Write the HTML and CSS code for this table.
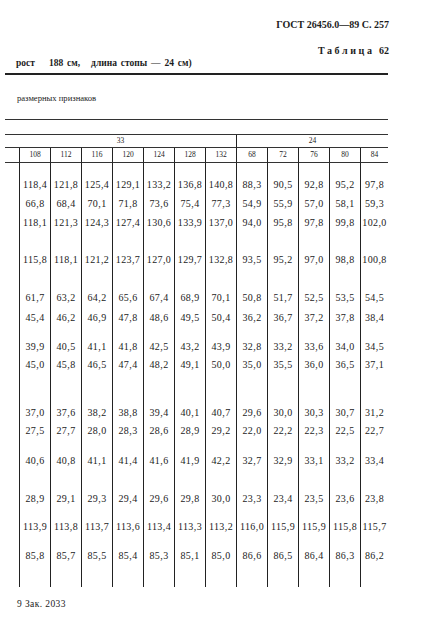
FILE: index.html
```html
<!DOCTYPE html>
<html lang="ru">
<head>
<meta charset="utf-8">
<title>ГОСТ 26456.0—89 С. 257</title>
<link rel="stylesheet" href="styles.css">
</head>
<body>
<div class="page">
  <div class="gost">ГОСТ 26456.0—89 С. 257</div>
  <div class="tabl"><span class="spaced">Таблица</span> 62</div>
  <div class="title"><span>рост</span><span class="g1">188 см,</span><span class="g2">длина стопы — 24 см)</span></div>
  <div class="rule"></div>
  <div class="label">размерных признаков</div>
  <table class="data">
    <colgroup>
      <col class="lab">
      <col class="c"><col class="c"><col class="c"><col class="c"><col class="c"><col class="c"><col class="c">
      <col class="c"><col class="c"><col class="c"><col class="c">
      <col class="last">
    </colgroup>
    <tr class="r0"><td colspan="13" class="top"></td></tr>
    <tr class="r1"><td colspan="8" class="grp">33</td><td colspan="5" class="grp v">24</td></tr>
    <tr class="r2">
      <td class="hd"></td>
      <td class="hd v">108</td><td class="hd v">112</td><td class="hd v">116</td><td class="hd v">120</td><td class="hd v">124</td><td class="hd v">128</td><td class="hd v">132</td>
      <td class="hd v">68</td><td class="hd v">72</td><td class="hd v">76</td><td class="hd v">80</td><td class="hd v">84</td>
    </tr>
    <tr class="h30"><td></td><td class="v">118,4</td><td class="v">121,8</td><td class="v">125,4</td><td class="v">129,1</td><td class="v">133,2</td><td class="v">136,8</td><td class="v">140,8</td><td class="v">88,3</td><td class="v">90,5</td><td class="v">92,8</td><td class="v">95,2</td><td class="v">97,8</td></tr>
    <tr class="h19"><td></td><td class="v">66,8</td><td class="v">68,4</td><td class="v">70,1</td><td class="v">71,8</td><td class="v">73,6</td><td class="v">75,4</td><td class="v">77,3</td><td class="v">54,9</td><td class="v">55,9</td><td class="v">57,0</td><td class="v">58,1</td><td class="v">59,3</td></tr>
    <tr class="h19"><td></td><td class="v">118,1</td><td class="v">121,3</td><td class="v">124,3</td><td class="v">127,4</td><td class="v">130,6</td><td class="v">133,9</td><td class="v">137,0</td><td class="v">94,0</td><td class="v">95,8</td><td class="v">97,8</td><td class="v">99,8</td><td class="v">102,0</td></tr>
    <tr class="h37"><td></td><td class="v">115,8</td><td class="v">118,1</td><td class="v">121,2</td><td class="v">123,7</td><td class="v">127,0</td><td class="v">129,7</td><td class="v">132,8</td><td class="v">93,5</td><td class="v">95,2</td><td class="v">97,0</td><td class="v">98,8</td><td class="v">100,8</td></tr>
    <tr class="h38"><td></td><td class="v">61,7</td><td class="v">63,2</td><td class="v">64,2</td><td class="v">65,6</td><td class="v">67,4</td><td class="v">68,9</td><td class="v">70,1</td><td class="v">50,8</td><td class="v">51,7</td><td class="v">52,5</td><td class="v">53,5</td><td class="v">54,5</td></tr>
    <tr class="h20"><td></td><td class="v">45,4</td><td class="v">46,2</td><td class="v">46,9</td><td class="v">47,8</td><td class="v">48,6</td><td class="v">49,5</td><td class="v">50,4</td><td class="v">36,2</td><td class="v">36,7</td><td class="v">37,2</td><td class="v">37,8</td><td class="v">38,4</td></tr>
    <tr class="h29"><td></td><td class="v">39,9</td><td class="v">40,5</td><td class="v">41,1</td><td class="v">41,8</td><td class="v">42,5</td><td class="v">43,2</td><td class="v">43,9</td><td class="v">32,8</td><td class="v">33,2</td><td class="v">33,6</td><td class="v">34,0</td><td class="v">34,5</td></tr>
    <tr class="h18"><td></td><td class="v">45,0</td><td class="v">45,8</td><td class="v">46,5</td><td class="v">47,4</td><td class="v">48,2</td><td class="v">49,1</td><td class="v">50,0</td><td class="v">35,0</td><td class="v">35,5</td><td class="v">36,0</td><td class="v">36,5</td><td class="v">37,1</td></tr>
    <tr class="h48"><td></td><td class="v">37,0</td><td class="v">37,6</td><td class="v">38,2</td><td class="v">38,8</td><td class="v">39,4</td><td class="v">40,1</td><td class="v">40,7</td><td class="v">29,6</td><td class="v">30,0</td><td class="v">30,3</td><td class="v">30,7</td><td class="v">31,2</td></tr>
    <tr class="h18"><td></td><td class="v">27,5</td><td class="v">27,7</td><td class="v">28,0</td><td class="v">28,3</td><td class="v">28,6</td><td class="v">28,9</td><td class="v">29,2</td><td class="v">22,0</td><td class="v">22,2</td><td class="v">22,3</td><td class="v">22,5</td><td class="v">22,7</td></tr>
    <tr class="h30"><td></td><td class="v">40,6</td><td class="v">40,8</td><td class="v">41,1</td><td class="v">41,4</td><td class="v">41,6</td><td class="v">41,9</td><td class="v">42,2</td><td class="v">32,7</td><td class="v">32,9</td><td class="v">33,1</td><td class="v">33,2</td><td class="v">33,4</td></tr>
    <tr class="h38"><td></td><td class="v">28,9</td><td class="v">29,1</td><td class="v">29,3</td><td class="v">29,4</td><td class="v">29,6</td><td class="v">29,8</td><td class="v">30,0</td><td class="v">23,3</td><td class="v">23,4</td><td class="v">23,5</td><td class="v">23,6</td><td class="v">23,8</td></tr>
    <tr class="h28"><td></td><td class="v">113,9</td><td class="v">113,8</td><td class="v">113,7</td><td class="v">113,6</td><td class="v">113,4</td><td class="v">113,3</td><td class="v">113,2</td><td class="v">116,0</td><td class="v">115,9</td><td class="v">115,9</td><td class="v">115,8</td><td class="v">115,7</td></tr>
    <tr class="h29"><td></td><td class="v">85,8</td><td class="v">85,7</td><td class="v">85,5</td><td class="v">85,4</td><td class="v">85,3</td><td class="v">85,1</td><td class="v">85,0</td><td class="v">86,6</td><td class="v">86,5</td><td class="v">86,4</td><td class="v">86,3</td><td class="v">86,2</td></tr>
    <tr class="h23"><td></td><td class="v"></td><td class="v"></td><td class="v"></td><td class="v"></td><td class="v"></td><td class="v"></td><td class="v"></td><td class="v"></td><td class="v"></td><td class="v"></td><td class="v"></td><td class="v"></td></tr>
  </table>
  <div class="foot">9 Зак. 2033</div>
</div>
</body>
</html>
```

FILE: styles.css
```css
html, body {
  margin: 0;
  padding: 0;
  background: #ffffff;
}
body {
  font-family: "Liberation Serif", "Times New Roman", serif;
  color: #1c1c1c;
}
.page {
  margin-left: 5px;
  width: 384px;
  padding-top: 19px;
}
.gost {
  text-align: right;
  font-size: 10px;
  font-weight: bold;
  line-height: 12px;
  height: 12px;
}
.tabl {
  margin-top: 14px;
  text-align: right;
  font-size: 10px;
  font-weight: bold;
  line-height: 12px;
  height: 12px;
}
.spaced {
  letter-spacing: 2.6px;
  margin-right: 2px;
}
.title {
  display: flex;
  padding-left: 11px;
  font-size: 9.5px;
  font-weight: bold;
  line-height: 12px;
  height: 12px;
  word-spacing: 1.5px;
}
.g1 { margin-left: 14px; }
.g2 { margin-left: 11px; }
.rule {
  margin-top: 4px;
  height: 2px;
  width: 383px;
  background: #222;
}
.label {
  margin-top: 17px;
  padding-left: 12px;
  font-size: 8.6px;
  line-height: 12px;
  height: 12px;
}
.data {
  margin-top: 15px;
  width: 383px;
  table-layout: fixed;
  border-collapse: separate;
  border-spacing: 0;
}
col.lab { width: 14px; }
col.c { width: 31px; }
col.last { width: 28px; }
.data td {
  padding: 0;
  box-sizing: border-box;
  text-align: center;
  vertical-align: bottom;
  font-size: 10px;
  letter-spacing: 0.4px;
  line-height: 16px;
  white-space: nowrap;
  overflow: visible;
}
.data td.v { border-left: 1px solid #222; }
.data td.top {
  border-top: 1px solid #333;
  border-bottom: 1px solid #333;
}
.r0 { height: 16px; }
.r1 { height: 13px; }
.r2 { height: 15px; }
.data td.grp {
  vertical-align: middle;
  font-size: 7.5px;
  line-height: 10px;
  letter-spacing: 0;
  border-bottom: 1px solid #333;
}
.data td.hd {
  vertical-align: middle;
  font-size: 7.5px;
  line-height: 12px;
  letter-spacing: 0;
  border-bottom: 1px solid #333;
}
.h18 { height: 18px; }
.h19 { height: 19px; }
.h20 { height: 20px; }
.h23 { height: 23px; }
.h28 { height: 28px; }
.h29 { height: 29px; }
.h30 { height: 30px; }
.h37 { height: 37px; }
.h38 { height: 38px; }
.h48 { height: 48px; }
.foot {
  margin-top: 11px;
  padding-left: 12px;
  font-size: 9.5px;
  letter-spacing: 0.4px;
  line-height: 12px;
  height: 12px;
}
```
